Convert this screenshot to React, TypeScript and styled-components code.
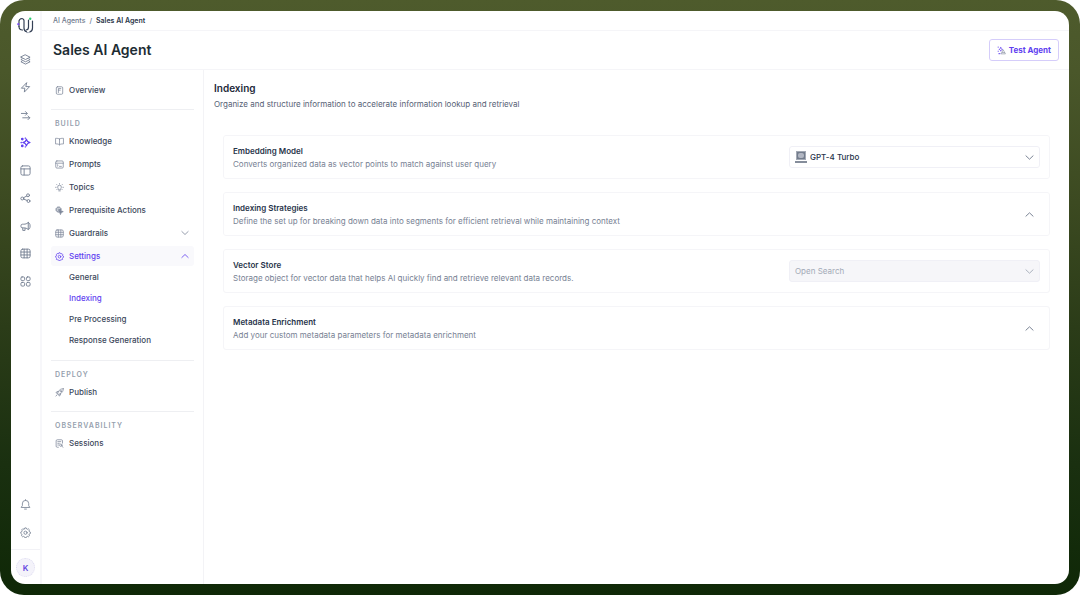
import React from 'react';
import styled, { createGlobalStyle } from 'styled-components';

const GlobalStyle = createGlobalStyle`
  *, *::before, *::after { box-sizing: border-box; }
  body {
    margin: 0;
    background: #fff;
    color: #3c475b;
    font-family: Inter, "Liberation Sans", sans-serif;
    font-size: 8px;
    line-height: 12px;
    -webkit-font-smoothing: antialiased;
  }
  button, select { font: inherit; color: inherit; }
  h1, h2, h3, p, ul, ol { margin: 0; padding: 0; }
  ul, ol { list-style: none; }
  a { color: inherit; text-decoration: none; }
`;

const Frame = styled.div`
  display: flex;
  min-height: 100vh;
  padding: 11px;
  border-radius: 24px;
  background: linear-gradient(180deg, #4e5b2c 0%, #4a572a 12%, #3c4a21 34%, #2b3c18 55%, #1a3010 78%, #0f2807 100%);
`;

const Window = styled.div`
  display: flex;
  flex: 1;
  min-width: 0;
  overflow: hidden;
  border-radius: 14px;
  background: #fff;
`;

const Rail = styled.nav`
  display: flex;
  flex-direction: column;
  align-items: center;
  flex: 0 0 31px;
  padding-top: 6px;
  border-right: 2px solid #f7f7fa;
  color: #747f92;
`;

const RailList = styled.ul`
  display: flex;
  flex-direction: column;
  justify-content: space-between;
  height: 233px;
  margin-top: 20px;
`;

const RailFooter = styled.div`
  margin-top: auto;
`;

const FooterList = styled.ul`
  display: flex;
  flex-direction: column;
  align-items: center;
  gap: 17px;
  margin-bottom: 11px;
`;

const RailLink = styled.a<{ $active?: boolean }>`
  display: block;
  color: ${(p) => (p.$active ? '#5f3ff0' : 'inherit')};
`;

const AvatarSlot = styled.div`
  width: 29px;
  padding: 8px 5px 7px;
  border-top: 1px solid #f2f2f6;
`;

const Avatar = styled.button`
  display: block;
  width: 19px;
  height: 19px;
  padding: 0;
  border: 1px dotted #dedcf2;
  border-radius: 50%;
  background: #f4f3fa;
  color: #6243e0;
  font-weight: 600;
`;

const Page = styled.div`
  display: flex;
  flex: 1;
  flex-direction: column;
  min-width: 0;
`;

const Breadcrumbs = styled.ol`
  display: flex;
  align-items: center;
  gap: 4px;
  height: 20px;
  padding: 0 11px;
  border-bottom: 1px solid #f5f5f8;
  color: #6f7a8d;
  font-size: 7px;
`;

const Crumb = styled.li<{ $current?: boolean }>`
  color: ${(p) => (p.$current ? '#2b3649' : 'inherit')};
  font-weight: ${(p) => (p.$current ? 600 : 500)};
`;

const Header = styled.header`
  display: flex;
  align-items: center;
  justify-content: space-between;
  height: 39px;
  padding: 0 10px 0 11px;
  border-bottom: 1px solid #f5f5f8;
`;

const PageTitle = styled.h1`
  color: #1d2c33;
  font-size: 14px;
  font-weight: 600;
  line-height: 20px;
`;

const TestButton = styled.button`
  display: flex;
  align-items: center;
  gap: 3px;
  height: 22px;
  padding: 0 7px;
  border: 1px solid #d5cdfa;
  border-radius: 3px;
  background: #fff;
  color: #5f3ff0;
  font-weight: 700;
`;

const Body = styled.div`
  display: flex;
  flex: 1;
  min-height: 0;
`;

const Sidebar = styled.nav`
  flex: 0 0 162px;
  padding: 10px 9px;
  border-right: 1px solid #f3f3f6;
`;

const NavSection = styled.section`
  & + & {
    margin-top: 9px;
    padding-top: 8px;
    border-top: 1px solid #eeeff2;
  }
`;

const SectionLabel = styled.h2`
  margin-bottom: 1px;
  padding: 0 4px;
  color: #969fae;
  font-size: 7px;
  font-weight: 600;
  letter-spacing: 1px;
  line-height: 12px;
  text-transform: uppercase;
`;

const NavList = styled.ul`
  display: flex;
  flex-direction: column;
  gap: 3px;
`;

const SubList = styled.ul`
  padding-top: 1px;
`;

const NavLink = styled.a<{ $active?: boolean }>`
  display: flex;
  align-items: center;
  gap: 5px;
  height: 20px;
  padding: 0 5px 0 4px;
  border-radius: 3px;
  background: ${(p) => (p.$active ? '#f9f9fc' : 'transparent')};
  color: ${(p) => (p.$active ? '#5f3ff0' : '#3c475b')};
  font-weight: 500;

  svg { color: ${(p) => (p.$active ? '#5f3ff0' : '#7d8799')}; }
  span { flex: 1; }
`;

const SubLink = styled.a<{ $active?: boolean }>`
  display: block;
  padding-left: 18px;
  color: ${(p) => (p.$active ? '#5f3ff0' : '#3c475b')};
  font-weight: 500;
  line-height: 21px;
`;

const Content = styled.main`
  flex: 1;
  min-width: 0;
  padding: 10px 19px 10px 10px;
`;

const ContentTitle = styled.h2`
  color: #1d2939;
  font-size: 10px;
  font-weight: 600;
  line-height: 16px;
`;

const Lead = styled.p`
  margin-top: 2px;
  color: #566175;
`;

const Cards = styled.div`
  display: flex;
  flex-direction: column;
  gap: 13px;
  margin: 25px 0 0 9px;
`;

const Card = styled.section`
  display: flex;
  align-items: center;
  justify-content: space-between;
  gap: 16px;
  height: 44px;
  padding: 0 9px;
  border: 1px solid #f5f5f8;
  border-radius: 3px;
`;

const CardTitle = styled.h3`
  color: #27344a;
  font-size: 8px;
  font-weight: 600;
  line-height: 13px;
`;

const CardText = styled.p`
  color: #778193;
`;

const SelectBox = styled.div<{ $disabled?: boolean }>`
  display: flex;
  align-items: center;
  flex: 0 1 251px;
  gap: 3px;
  height: 22px;
  padding: 0 5px;
  border: 1px solid #f0f0f6;
  border-radius: 3px;
  background: ${(p) => (p.$disabled ? '#f6f6f9' : '#fff')};
  color: ${(p) => (p.$disabled ? '#a3aab7' : '#27344a')};

  > svg:last-child { color: ${(p) => (p.$disabled ? '#a3aab7' : '#6b7689')}; }
`;

const Select = styled.select`
  flex: 1;
  min-width: 0;
  padding: 0;
  border: 0;
  appearance: none;
  background: transparent;
  font-weight: 500;
  line-height: 16px;

  &:disabled { color: inherit; font-weight: 400; opacity: 1; }
`;

const ToggleButton = styled.button`
  display: flex;
  margin-right: 5px;
  padding: 1px;
  border: 0;
  background: none;
  color: #6b7689;
`;

type IconProps = { size?: number; children: React.ReactNode; weight?: number };

const Icon = ({ size = 11, weight = 1.8, children }: IconProps) => (
  <svg
    width={size}
    height={size}
    viewBox="0 0 24 24"
    fill="none"
    stroke="currentColor"
    strokeWidth={weight}
    strokeLinecap="round"
    strokeLinejoin="round"
    display="block"
    aria-hidden="true"
  >
    {children}
  </svg>
);

const gearPath =
  'M9.6 4.2 10.5 2h3l.9 2.2 1.9.8 2.2-.9 2.1 2.1-.9 2.2.8 1.9 2.2.9v3l-2.2.9-.8 1.9.9 2.2-2.1 2.1-2.2-.9-1.9.8-.9 2.2h-3l-.9-2.2-1.9-.8-2.2.9-2.1-2.1.9-2.2-.8-1.9L1.8 14v-3l2.2-.9.8-1.9-.9-2.2 2.1-2.1 2.2.9z';

const glyphs = {
  layers: (
    <>
      <path d="M12 2 22 7 12 12 2 7z" />
      <path d="m4.5 10.500-2.500 1.500 10 5 10-5-2.500-1.500" />
      <path d="m4.5 15.500-2.500 1.500 10 5 10-5-2.500-1.500" />
    </>
  ),
  bolt: <path d="M14 2 3 13.500h7.500L9.500 22 21 10h-7.500z" />,
  flow: (
    <>
      <path d="M3 7.500h12M12 3.500l4 4-4 4" />
      <path d="M6 17h15M17.500 13l4 4-4 4" />
    </>
  ),
  sparkle: (
    <>
      <path d="M14 4.500c.8 4.500 3 6.700 8 7.500-5 .8-7.200 3-8 7.500-.8-4.500-3-6.700-8-7.500 5-.8 7.200-3 8-7.500z" />
      <circle cx="5" cy="4.500" r="1.800" fill="currentColor" />
      <circle cx="5" cy="19.500" r="1.800" fill="currentColor" />
      <circle cx="2.800" cy="12" r=".7" fill="currentColor" />
      <path d="M11.500 2v1M11.500 21v1" />
    </>
  ),
  layout: (
    <>
      <rect x="2" y="2" width="20" height="20" rx="3.500" />
      <path d="M2 8.500h20M9 8.500v13" />
    </>
  ),
  share: (
    <>
      <circle cx="5" cy="12" r="3.200" />
      <circle cx="17.500" cy="5" r="3.200" />
      <circle cx="18.500" cy="17.500" r="3.200" />
      <path d="m7.800 10.300 7-3.800M7.900 13.300l7.700 3" />
    </>
  ),
  megaphone: (
    <>
      <path d="M18 3.500v15c-3-2.500-6-3.500-10-3.500H5.500A3.500 3.500 0 0 1 2 11.500v-1A3.500 3.500 0 0 1 5.500 7H8c4 0 7-1 10-3.500z" />
      <path d="M18 3.500c2.500 0 4 3 4 7.500s-1.500 7.500-4 7.500M6 15v5.500h5V16" />
    </>
  ),
  table: (
    <>
      <rect x="2" y="2.500" width="20" height="19" rx="3.500" />
      <path d="M2 8.800h20M2 15.200h20M9 2.500v19M15.500 2.500v19" />
    </>
  ),
  apps: (
    <>
      <rect x="2" y="2" width="8" height="8" rx="2.500" />
      <rect x="14" y="2" width="8" height="8" rx="2.500" />
      <rect x="2" y="14" width="8" height="8" rx="2.500" />
      <rect x="14" y="14" width="8" height="8" rx="2.500" />
    </>
  ),
  bell: (
    <>
      <path d="M5 10a7 7 0 0 1 14 0v4.500l2.500 4h-19l2.500-4z" />
      <path d="M10 22h4M12 1.500V3" />
    </>
  ),
  gear: (
    <>
      <path d={gearPath} />
      <circle cx="12" cy="12.500" r="3.500" />
    </>
  ),
  page: (
    <>
      <rect x="3.500" y="2" width="17" height="20" rx="3" />
      <path d="M9 17.500V6.500h6.500M9 11h5" />
    </>
  ),
  book: (
    <path d="M12 5.500C9.500 3.500 6 3.500 1.500 3.500v15c4.500 0 8 0 10.500 2.500 2.500-2.500 6-2.500 10.500-2.500v-15c-4.500 0-8 0-10.500 2zM12 5.500V21" />
  ),
  prompt: (
    <>
      <rect x="2" y="2.500" width="20" height="19" rx="3" />
      <path d="M2 8.500h20M6 12.500l2.500 2L6 16.500M12 17h5" />
    </>
  ),
  bulb: (
    <>
      <path d="M9.500 17c0-2-2.500-2.800-2.500-6a5 5 0 0 1 10 0c0 3.200-2.500 4-2.500 6zM10 21h4" />
      <path d="M12 1.500V3M1.500 11.500H3M21 11.500h1.500M4.500 4l1 1M19.500 4l-1 1M4.500 18l1-1M19.500 18l-1-1" />
    </>
  ),
  actions: (
    <>
      <circle cx="9.500" cy="9.500" r="7" strokeDasharray="3.500 1.600" />
      <circle cx="9.500" cy="9.500" r="5.500" />
      <circle cx="9.500" cy="9.500" r="2" />
      <path d="m11 11 11 4-5 2-2 5z" fill="currentColor" />
    </>
  ),
  rocket: (
    <>
      <path d="M22 2c-6 0-10 2-13 7.500L7 14l3 3 4.500-2C20 12 22 8 22 2z" />
      <path d="M9 9.500H5L2.500 13l4.500 1M14.500 15v4L11 21.500 10 17M6 17.500l-3.500 4" />
      <circle cx="15.500" cy="8.500" r="1.800" />
    </>
  ),
  sessions: (
    <>
      <path d="M9 22H6a3 3 0 0 1-3-3V5a3 3 0 0 1 3-3h11a3 3 0 0 1 3 3v6" />
      <path d="M7.500 7h8M7.500 11.500h4M7.500 16h2" />
      <circle cx="15.500" cy="16.500" r="3.200" />
      <path d="m18 19 3.500 3" />
    </>
  ),
  down: <path d="m2.500 7.500 9.500 9 9.500-9" />,
  up: <path d="m2.500 16.500 9.500-9 9.500 9" />,
};

type Glyph = keyof typeof glyphs;

const Logo = () => (
  <svg width="17" height="17" viewBox="0 0 17 17" fill="none" strokeLinecap="round" display="block" role="img" aria-label="Home">
    <g stroke="#344055" strokeWidth="1.200">
      <path d="M2 9.500V5a3 3 0 0 1 3-3.500A2.500 2.500 0 0 1 7 4.500V11a4 4 0 0 0 2.500 3.800" />
      <path d="M2 9.500c0 2.500 1 3.500 3.500 3.500M11.500 3v7c0 2-1 3-2.500 3" />
      <path d="M15.500 4v7c0 2.300-1 3.500-2.800 4" />
    </g>
    <path d="M9.800 15.600h1.600" stroke="#9aa2b1" strokeWidth="1" />
    <circle cx="1.300" cy="7.200" r="1.100" fill="#7a4df0" />
    <circle cx="13.200" cy="1.800" r="1.200" fill="#2ecc71" />
  </svg>
);

const TestIcon = () => (
  <svg width="9" height="9" viewBox="0 0 24 24" fill="none" strokeWidth="1.800" strokeLinecap="round" strokeLinejoin="round" display="block" aria-hidden="true">
    <path d="M10 4c.5 3 2 4.500 5 5-3 .5-4.500 2-5 5-.5-3-2-4.500-5-5 3-.5 4.500-2 5-5z" stroke="#5f3ff0" />
    <path d="M3 3h.5M3 14h.5M5 20.500h3" stroke="#5f3ff0" strokeWidth="2.600" />
    <path d="m17 11 5.500 10H12zM14 17.500h6" stroke="#8a93a3" />
  </svg>
);

const ModelIcon = () => (
  <svg width="12" height="12" viewBox="0 0 12 12" display="block" aria-hidden="true">
    <rect x="1" y="0" width="10" height="9" fill="#a3a9b4" />
    <rect x="2" y="1" width="8" height="7" fill="#737c8c" />
    <rect x="3" y="2" width="6" height="5" rx="2" fill="#b1b6c2" />
    <rect x="0" y="10" width="12" height="2" fill="#858d9b" />
  </svg>
);

const railItems: { glyph: Glyph; label: string }[] = [
  { glyph: 'layers', label: 'Data' },
  { glyph: 'bolt', label: 'Events' },
  { glyph: 'flow', label: 'Flows' },
  { glyph: 'sparkle', label: 'AI Agents' },
  { glyph: 'layout', label: 'Layouts' },
  { glyph: 'share', label: 'Integrations' },
  { glyph: 'megaphone', label: 'Campaigns' },
  { glyph: 'table', label: 'Tables' },
  { glyph: 'apps', label: 'Apps' },
];

type NavItem = { glyph: Glyph; label: string; chevron?: 'up' | 'down'; active?: boolean; children?: string[] };

const sections: { label?: string; items: NavItem[] }[] = [
  { items: [{ glyph: 'page', label: 'Overview' }] },
  {
    label: 'Build',
    items: [
      { glyph: 'book', label: 'Knowledge' },
      { glyph: 'prompt', label: 'Prompts' },
      { glyph: 'bulb', label: 'Topics' },
      { glyph: 'actions', label: 'Prerequisite Actions' },
      { glyph: 'table', label: 'Guardrails', chevron: 'down' },
      {
        glyph: 'gear',
        label: 'Settings',
        chevron: 'up',
        active: true,
        children: ['General', 'Indexing', 'Pre Processing', 'Response Generation'],
      },
    ],
  },
  { label: 'Deploy', items: [{ glyph: 'rocket', label: 'Publish' }] },
  { label: 'Observability', items: [{ glyph: 'sessions', label: 'Sessions' }] },
];

type SettingCardProps = { id: string; title: string; text: string; children?: React.ReactNode };

const SettingCard = ({ id, title, text, children }: SettingCardProps) => (
  <Card aria-labelledby={id}>
    <div>
      <CardTitle id={id}>{title}</CardTitle>
      <CardText>{text}</CardText>
    </div>
    {children ?? (
      <ToggleButton type="button" aria-label={`Expand ${title}`}>
        <Icon size={9} weight={2.4}>{glyphs.up}</Icon>
      </ToggleButton>
    )}
  </Card>
);

export default function App() {
  return (
    <>
      <GlobalStyle />
      <Frame>
        <Window>
          <Rail aria-label="Main">
            <Logo />
            <RailList>
              {railItems.map(({ glyph, label }) => (
                <li key={label}>
                  <RailLink href="#" aria-label={label} $active={glyph === 'sparkle'}>
                    <Icon weight={glyph === 'sparkle' ? 2.4 : 2}>{glyphs[glyph]}</Icon>
                  </RailLink>
                </li>
              ))}
            </RailList>
            <RailFooter>
              <FooterList>
                <li>
                  <RailLink href="#" aria-label="Notifications">
                    <Icon>{glyphs.bell}</Icon>
                  </RailLink>
                </li>
                <li>
                  <RailLink href="#" aria-label="Settings">
                    <Icon>{glyphs.gear}</Icon>
                  </RailLink>
                </li>
              </FooterList>
              <AvatarSlot>
                <Avatar type="button">K</Avatar>
              </AvatarSlot>
            </RailFooter>
          </Rail>

          <Page>
            <Breadcrumbs>
              <Crumb><a href="#">AI Agents</a></Crumb>
              <Crumb aria-hidden="true">/</Crumb>
              <Crumb $current>Sales AI Agent</Crumb>
            </Breadcrumbs>
            <Header>
              <PageTitle>Sales AI Agent</PageTitle>
              <TestButton type="button">
                <TestIcon />
                Test Agent
              </TestButton>
            </Header>

            <Body>
              <Sidebar aria-label="Agent">
                {sections.map((section, i) => (
                  <NavSection key={i}>
                    {section.label && <SectionLabel>{section.label}</SectionLabel>}
                    <NavList>
                      {section.items.map((item) => (
                        <li key={item.label}>
                          <NavLink href="#" $active={item.active}>
                            <Icon size={9} weight={2}>{glyphs[item.glyph]}</Icon>
                            <span>{item.label}</span>
                            {item.chevron && <Icon size={8} weight={2.4}>{glyphs[item.chevron]}</Icon>}
                          </NavLink>
                          {item.children && (
                            <SubList>
                              {item.children.map((child) => (
                                <li key={child}>
                                  <SubLink href="#" $active={child === 'Indexing'}>{child}</SubLink>
                                </li>
                              ))}
                            </SubList>
                          )}
                        </li>
                      ))}
                    </NavList>
                  </NavSection>
                ))}
              </Sidebar>

              <Content>
                <ContentTitle>Indexing</ContentTitle>
                <Lead>Organize and structure information to accelerate information lookup and retrieval</Lead>
                <Cards>
                  <SettingCard
                    id="embedding-model"
                    title="Embedding Model"
                    text="Converts organized data as vector points to match against user query"
                  >
                    <SelectBox>
                      <ModelIcon />
                      <Select aria-labelledby="embedding-model">
                        <option>GPT-4 Turbo</option>
                      </Select>
                      <Icon size={9} weight={2.4}>{glyphs.down}</Icon>
                    </SelectBox>
                  </SettingCard>
                  <SettingCard
                    id="indexing-strategies"
                    title="Indexing Strategies"
                    text="Define the set up for breaking down data into segments for efficient retrieval while maintaining context"
                  />
                  <SettingCard
                    id="vector-store"
                    title="Vector Store"
                    text="Storage object for vector data that helps AI quickly find and retrieve relevant data records."
                  >
                    <SelectBox $disabled>
                      <Select aria-labelledby="vector-store" disabled>
                        <option>Open Search</option>
                      </Select>
                      <Icon size={9} weight={2.4}>{glyphs.down}</Icon>
                    </SelectBox>
                  </SettingCard>
                  <SettingCard
                    id="metadata-enrichment"
                    title="Metadata Enrichment"
                    text="Add your custom metadata parameters for metadata enrichment"
                  />
                </Cards>
              </Content>
            </Body>
          </Page>
        </Window>
      </Frame>
    </>
  );
}
